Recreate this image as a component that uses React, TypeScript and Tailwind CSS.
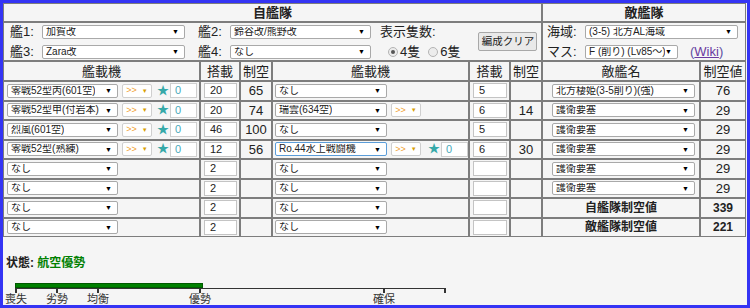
import type { FC } from "react";

// --- データ ---
type Slot = {
  name: string;
  slot: string;
  air: string;
  prof?: boolean;
  star?: boolean;
  focus?: boolean;
};

const LEFT_SLOTS: Slot[] = [
  { name: "零戦52型丙(601空)", slot: "20", air: "65", prof: true, star: true },
  { name: "零戦52型甲(付岩本)", slot: "20", air: "74", prof: true, star: true },
  { name: "烈風(601空)", slot: "46", air: "100", prof: true, star: true },
  { name: "零戦52型(熟練)", slot: "12", air: "56", prof: true, star: true },
  { name: "なし", slot: "2", air: "" },
  { name: "なし", slot: "2", air: "" },
  { name: "なし", slot: "2", air: "" },
  { name: "なし", slot: "2", air: "" },
];

const RIGHT_SLOTS: Slot[] = [
  { name: "なし", slot: "5", air: "" },
  { name: "瑞雲(634空)", slot: "6", air: "14", prof: true },
  { name: "なし", slot: "5", air: "" },
  { name: "Ro.44水上戦闘機", slot: "6", air: "30", prof: true, star: true, focus: true },
  { name: "なし", slot: "", air: "" },
  { name: "なし", slot: "", air: "" },
  { name: "なし", slot: "", air: "" },
  { name: "なし", slot: "", air: "" },
];

const ENEMIES: { name: string; air: string; summary?: boolean }[] = [
  { name: "北方棲姫(3-5削り)(強)", air: "76" },
  { name: "護衛要塞", air: "29" },
  { name: "護衛要塞", air: "29" },
  { name: "護衛要塞", air: "29" },
  { name: "護衛要塞", air: "29" },
  { name: "護衛要塞", air: "29" },
  { name: "自艦隊制空値", air: "339", summary: true },
  { name: "敵艦隊制空値", air: "221", summary: true },
];

const GAUGE_TICKS: { x: number; label?: string }[] = [
  { x: 0, label: "喪失" },
  { x: 41, label: "劣勢" },
  { x: 82, label: "均衡" },
  { x: 184, label: "優勢" },
  { x: 368, label: "確保" },
  { x: 429 },
];

// --- 部品 ---
const Select: FC<{ text: string; className: string; focus?: boolean }> = ({
  text,
  className,
  focus,
}) => (
  <div
    className={`flex items-center justify-between h-[14px] pl-[3px] pr-[5px] bg-white rounded-[2px] border ${
      focus ? "border-[#5b9dd9]" : "border-[#a9a9a9]"
    } ${className}`}
  >
    <span className="text-[10px] leading-none text-[#222] whitespace-nowrap overflow-hidden">
      {text}
    </span>
    <span className="text-[7px] leading-none text-black">▼</span>
  </div>
);

const ProfBox: FC<{ className: string }> = ({ className }) => (
  <div
    className={`flex items-center justify-center gap-[5px] w-[30px] h-[14px] bg-white border border-[#cfcfcf] rounded-[2px] ${className}`}
  >
    <span className="text-[9px] leading-none text-[#f0a030]">&gt;&gt;</span>
    <span className="text-[6px] leading-none text-[#d9a000]">▼</span>
  </div>
);

const Star: FC<{ className: string }> = ({ className }) => (
  <>
    <span className={`text-[12px] leading-none text-[#36a9a9] ${className}`}>★</span>
    <div className="ml-[1px] w-[27px] h-[15px] pl-[4px] flex items-center bg-white border border-[#cfcfcf] text-[11px] leading-none text-[#4aaabb]">
      0
    </div>
  </>
);

const SlotInput: FC<{ value: string; className: string }> = ({ value, className }) => (
  <div
    className={`h-[15px] pl-[5px] flex items-center bg-white border border-[#c4c4c4] text-[11px] leading-none text-[#222] ${className}`}
  >
    {value}
  </div>
);

const Cell: FC<{ className?: string; children?: React.ReactNode }> = ({
  className = "",
  children,
}) => <div className={`bg-[#f5f5f5] h-[17.5px] flex items-center ${className}`}>{children}</div>;

const Radio: FC<{ checked?: boolean }> = ({ checked }) => (
  <span className="flex items-center justify-center w-[10px] h-[10px] rounded-full border border-[#b4b4b4] bg-[#ececec]">
    {checked && <span className="w-[4px] h-[4px] rounded-full bg-[#555]" />}
  </span>
);

// --- メイン ---
export default function App() {
  return (
    <div className="w-[750px] h-[308px] overflow-hidden border-[3px] border-[#3434f4] bg-[#f5f5f5] text-[#222] font-['Liberation_Sans','Noto_Sans_CJK_JP',sans-serif]">
      <div className="grid grid-cols-[195px_38px_30px_195px_39px_30px_156px_44px] gap-[2px] p-[1px] w-[743px] bg-[#7d7d7d]">
        {/* 見出し */}
        <div className="col-span-6 h-[17px] flex items-center justify-center bg-[#f5f5f5] text-[13px] font-bold leading-none">
          自艦隊
        </div>
        <div className="col-span-2 h-[17px] flex items-center justify-center bg-[#f5f5f5] text-[13px] font-bold leading-none">
          敵艦隊
        </div>

        {/* 艦選択 */}
        <div className="col-span-6 h-[37px] flex items-center bg-[#f5f5f5] pl-[6px] text-[13px] leading-none">
          <div className="flex flex-col gap-[6px]">
            <div className="flex items-center">
              <span className="w-[32px]">艦1:</span>
              <Select text="加賀改" className="w-[143px]" />
              <span className="ml-[13px] w-[32px]">艦2:</span>
              <Select text="鈴谷改/熊野改" className="w-[141px]" />
            </div>
            <div className="flex items-center">
              <span className="w-[32px]">艦3:</span>
              <Select text="Zara改" className="w-[143px]" />
              <span className="ml-[13px] w-[32px]">艦4:</span>
              <Select text="なし" className="w-[141px]" />
            </div>
          </div>
          <div className="ml-[9px] flex flex-col gap-[6px]">
            <span className="h-[14px] flex items-center">表示隻数:</span>
            <div className="h-[14px] flex items-center pl-[8px]">
              <Radio checked />
              <span className="ml-[2px]">4隻</span>
              <span className="ml-[8px]">
                <Radio />
              </span>
              <span className="ml-[2px]">6隻</span>
            </div>
          </div>
          <button className="ml-[18px] w-[59px] h-[19px] rounded-[2px] border border-[#a8a8a8] bg-[#e9e9e9] text-[10.5px] leading-none text-[#222]">
            編成クリア
          </button>
        </div>
        <div className="col-span-2 h-[37px] flex flex-col justify-center gap-[6px] bg-[#f5f5f5] pl-[4px] text-[13px] leading-none">
          <div className="flex items-center">
            <span className="w-[38px]">海域:</span>
            <Select text="(3-5) 北方AL海域" className="w-[153px]" />
          </div>
          <div className="flex items-center">
            <span className="w-[38px]">マス:</span>
            <Select text="F (削り) (Lv85～)" className="w-[93px]" />
            <span className="ml-[12px] text-[#5a4fa0]">
              (<span className="underline text-[#6a3aa0]">Wiki</span>)
            </span>
          </div>
        </div>

        {/* 列見出し */}
        {["艦載機", "搭載", "制空", "艦載機", "搭載", "制空", "敵艦名", "制空値"].map((h, i) => (
          <div
            key={i}
            className="h-[18px] flex items-center justify-center bg-[#f5f5f5] text-[13px] leading-none"
          >
            {h}
          </div>
        ))}

        {/* 装備行 */}
        {LEFT_SLOTS.map((l, i) => {
          const r = RIGHT_SLOTS[i];
          const e = ENEMIES[i];
          return (
            <div key={i} className="contents">
              <Cell className="pl-[3px]">
                <Select text={l.name} className="w-[111px]" />
                {l.prof && <ProfBox className="ml-[4px]" />}
                {l.star && <Star className="ml-[5px]" />}
              </Cell>
              <Cell className="pl-[3px]">
                <SlotInput value={l.slot} className="w-[33px]" />
              </Cell>
              <Cell className="justify-center text-[13px] leading-none">{l.air}</Cell>
              <Cell className="pl-[2px]">
                <Select text={r.name} className="w-[112px]" focus={r.focus} />
                {r.prof && <ProfBox className="ml-[4px]" />}
                {r.star && <Star className="ml-[7px]" />}
              </Cell>
              <Cell className="pl-[3px]">
                <SlotInput value={r.slot} className="w-[34px]" />
              </Cell>
              <Cell className="justify-center text-[13px] leading-none">{r.air}</Cell>
              {e.summary ? (
                <Cell className="justify-center text-[12px] font-bold leading-none">{e.name}</Cell>
              ) : (
                <Cell className="pl-[9px]">
                  <Select text={e.name} className="w-[143px]" />
                </Cell>
              )}
              <Cell
                className={`justify-center leading-none ${
                  e.summary ? "text-[12px] font-bold" : "text-[13px]"
                }`}
              >
                {e.air}
              </Cell>
            </div>
          );
        })}
      </div>

      {/* 状態 */}
      <div className="mt-[19px] pl-[3px] text-[12px] font-bold leading-[14px]">
        状態: <span className="text-[#008000]">航空優勢</span>
      </div>

      {/* 制空ゲージ */}
      <div className="relative ml-[12px] mt-[13px] w-[431px] h-[24px]">
        <div className="w-[188px] h-[5px] bg-[#008000] border border-[#005a00]" />
        <div className="h-[1px] bg-[#333]" />
        {GAUGE_TICKS.map((t) => (
          <div key={t.x}>
            <div
              className="absolute top-[5px] w-[2px] h-[5px] bg-[#333]"
              style={{ left: t.x }}
            />
            {t.label && (
              <span
                className="absolute top-[11px] -translate-x-1/2 text-[11px] leading-none text-[#333] whitespace-nowrap"
                style={{ left: t.x + 1 }}
              >
                {t.label}
              </span>
            )}
          </div>
        ))}
      </div>
    </div>
  );
}
